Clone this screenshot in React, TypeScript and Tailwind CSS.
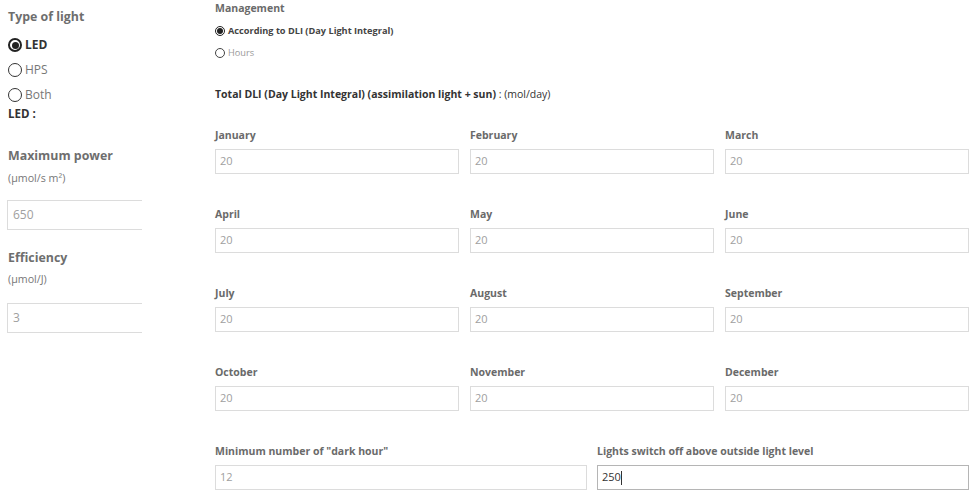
import React from "react";

const font = { fontFamily: '"Open Sans", "Noto Sans", sans-serif' };

function BigRadio({ checked, label }: { checked?: boolean; label: string }) {
  return (
    <div className="flex items-center h-[20px]">
      {checked ? (
        <span className="w-[14px] h-[14px] rounded-full border-[2px] border-[#222] flex items-center justify-center bg-white">
          <span className="w-[7px] h-[7px] rounded-full bg-[#222]" />
        </span>
      ) : (
        <span className="w-[14px] h-[14px] rounded-full border border-[#333] bg-white" />
      )}
      <span
        className={
          checked
            ? "ml-[3px] text-[12px] font-bold text-[#333] leading-[20px]"
            : "ml-[3px] text-[12px] text-[#777] leading-[20px]"
        }
      >
        {label}
      </span>
    </div>
  );
}

function SmallRadio({ checked, label }: { checked?: boolean; label: string }) {
  return (
    <div className="flex items-center h-[16px]">
      {checked ? (
        <span className="w-[10px] h-[10px] rounded-full border border-[#222] flex items-center justify-center bg-white">
          <span className="w-[6px] h-[6px] rounded-full bg-[#222]" />
        </span>
      ) : (
        <span className="w-[10px] h-[10px] rounded-full border border-[#444] bg-white" />
      )}
      <span
        className={
          checked
            ? "ml-[3px] text-[9.2px] font-bold text-[#444] leading-[16px]"
            : "ml-[3px] text-[9.2px] text-[#999] leading-[16px]"
        }
      >
        {label}
      </span>
    </div>
  );
}

function Field({ label, value }: { label: string; value: string }) {
  return (
    <div className="flex flex-col">
      <div className="text-[10.5px] leading-[16px] font-bold text-[#6a6a6a]">{label}</div>
      <div className="mt-[6px] h-[25px] border border-[#dcdcdc] bg-white flex items-center pl-[4px] text-[11px] text-[#a0a0a0]">
        {value}
      </div>
    </div>
  );
}

const months = [
  "January",
  "February",
  "March",
  "April",
  "May",
  "June",
  "July",
  "August",
  "September",
  "October",
  "November",
  "December",
];

export default function App() {
  return (
    <div style={font} className="w-[975px] h-[500px] bg-white flex overflow-hidden">
      {/* Left column */}
      <div className="w-[142px] shrink-0 overflow-hidden pl-[8px] flex flex-col">
        <div className="mt-[8px] text-[12.4px] leading-[18px] font-bold text-[#6e6e6e]">Type of light</div>
        <div className="mt-[9px] flex flex-col gap-[5px]">
          <BigRadio checked label="LED" />
          <BigRadio label="HPS" />
          <BigRadio label="Both" />
        </div>
        <div className="mt-[1px] text-[11.5px] leading-[16px] font-bold text-[#333]">LED :</div>
        <div className="mt-[25px] text-[12.4px] leading-[18px] font-bold text-[#6e6e6e]">Maximum power</div>
        <div className="mt-[6px] text-[10.7px] leading-[14px] text-[#777]">(µmol/s m²)</div>
        <div className="mt-[15px] -ml-[1px] w-[200px] h-[30px] border border-[#dcdcdc] flex items-center pl-[5px] text-[12px] text-[#a0a0a0]">
          650
        </div>
        <div className="mt-[19px] text-[12.4px] leading-[18px] font-bold text-[#6e6e6e]">Efficiency</div>
        <div className="mt-[5px] text-[10.7px] leading-[14px] text-[#777]">(µmol/J)</div>
        <div className="mt-[17px] -ml-[1px] w-[200px] h-[30px] border border-[#dcdcdc] flex items-center pl-[5px] text-[12px] text-[#a0a0a0]">
          3
        </div>
      </div>

      {/* Right column */}
      <div className="ml-[73px] w-[754px] flex flex-col">
        <div className="text-[10.5px] leading-[16px] font-bold text-[#6a6a6a]">Management</div>
        <div className="mt-[7px]">
          <SmallRadio checked label="According to DLI (Day Light Integral)" />
        </div>
        <div className="mt-[6px]">
          <SmallRadio label="Hours" />
        </div>
        <div className="mt-[25px] text-[10.5px] leading-[16px] text-[#333]">
          <span className="font-bold">Total DLI (Day Light Integral) (assimilation light + sun)</span>
          <span> : (mol/day)</span>
        </div>
        <div className="mt-[25px] grid grid-cols-3 gap-x-[11px] gap-y-[32px]">
          {months.map((m) => (
            <Field key={m} label={m} value="20" />
          ))}
        </div>
        <div className="mt-[32px] grid grid-cols-2 gap-x-[10px]">
          <Field label={'Minimum number of "dark hour"'} value="12" />
          <div className="flex flex-col">
            <div className="text-[10.5px] leading-[16px] font-bold text-[#6a6a6a]">
              Lights switch off above outside light level
            </div>
            <div className="mt-[6px] h-[25px] border border-[#b5b5b5] bg-white flex items-center pl-[4px] text-[11px] text-[#333]">
              250
              <span className="inline-block w-px h-[14px] bg-[#333]" />
            </div>
          </div>
        </div>
      </div>
    </div>
  );
}
